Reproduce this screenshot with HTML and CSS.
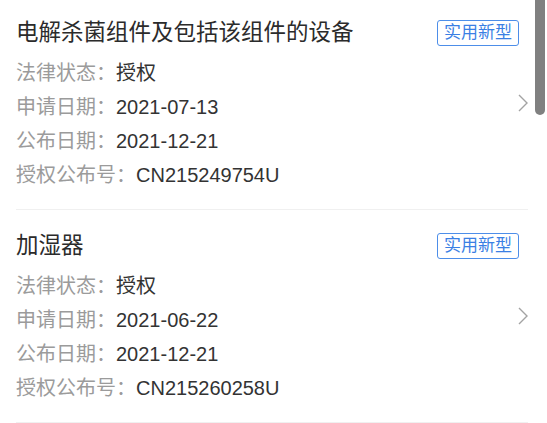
FILE: index.html
```html
<!DOCTYPE html>
<html lang="zh">
<head>
<meta charset="utf-8">
<link rel="stylesheet" href="styles.css">
</head>
<body>
<div class="page">
  <div class="list">
    <div class="item">
      <div class="head">
        <div class="title">电解杀菌组件及包括该组件的设备</div>
        <span class="badge">实用新型</span>
      </div>
      <div class="rows">
        <div class="row"><span class="label">法律状态：</span><span class="value">授权</span></div>
        <div class="row"><span class="label">申请日期：</span><span class="value">2021-07-13</span></div>
        <div class="row"><span class="label">公布日期：</span><span class="value">2021-12-21</span></div>
        <div class="row"><span class="label">授权公布号：</span><span class="value">CN215249754U</span></div>
      </div>
      <svg class="chev" width="10" height="18" viewBox="0 0 10 18"><polyline points="1,1 9,9 1,17" fill="none" stroke="#a3a3a3" stroke-width="1.4"/></svg>
    </div>
    <div class="item">
      <div class="head">
        <div class="title">加湿器</div>
        <span class="badge">实用新型</span>
      </div>
      <div class="rows">
        <div class="row"><span class="label">法律状态：</span><span class="value">授权</span></div>
        <div class="row"><span class="label">申请日期：</span><span class="value">2021-06-22</span></div>
        <div class="row"><span class="label">公布日期：</span><span class="value">2021-12-21</span></div>
        <div class="row"><span class="label">授权公布号：</span><span class="value">CN215260258U</span></div>
      </div>
      <svg class="chev" width="10" height="18" viewBox="0 0 10 18"><polyline points="1,1 9,9 1,17" fill="none" stroke="#a3a3a3" stroke-width="1.4"/></svg>
    </div>
  </div>
  <div class="scrollbar"></div>
</div>
</body>
</html>
```
FILE: styles.css
```css
html, body {
  margin: 0;
  padding: 0;
  background: #ffffff;
}
body {
  font-family: "Liberation Sans", "Noto Sans CJK SC", sans-serif;
  color: #333333;
  overflow: hidden;
}
.page {
  position: relative;
  width: 547px;
  height: 423px;
  overflow: hidden;
}
.list {
  margin-top: -3px;
  padding: 0 19px 0 16px;
}
.item {
  position: relative;
  padding: 23px 0 17px 0;
  border-bottom: 1px solid #f0f0f0;
}
.head {
  display: flex;
  align-items: center;
  justify-content: space-between;
  padding-right: 9px;
  height: 26px;
}
.title {
  font-size: 22.5px;
  line-height: 26px;
  color: #2b2b2b;
}
.badge {
  font-size: 17px;
  line-height: 24px;
  height: 24px;
  padding: 0 6px;
  border: 1px solid #4d8ee9;
  border-radius: 3px;
  color: #3a7fe4;
}
.rows {
  margin-top: 10px;
}
.row {
  font-size: 20px;
  line-height: 34px;
  height: 34px;
  white-space: nowrap;
}
.label {
  color: #9b9b9b;
}
.value {
  color: #333333;
}
.chev {
  position: absolute;
  right: 0;
  top: 50%;
  margin-top: -9px;
}
.scrollbar {
  position: absolute;
  left: 535px;
  top: -6px;
  width: 10px;
  height: 121px;
  border-radius: 5px;
  background: #808080;
}
```
